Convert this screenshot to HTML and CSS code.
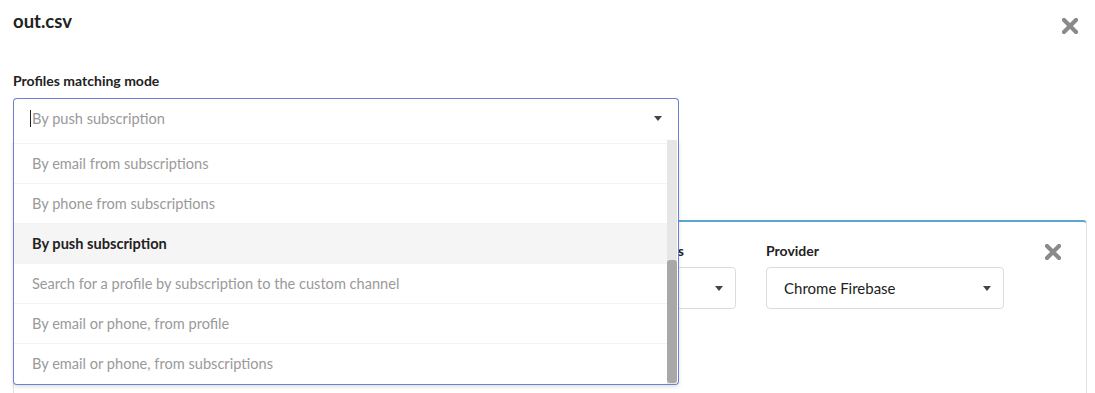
FILE: index.html
```html
<!DOCTYPE html>
<html>
<head>
<meta charset="utf-8">
<link rel="stylesheet" href="styles.css">
</head>
<body>
<div class="modal">
  <div class="header">
    <h1 class="title">out.csv</h1>
    <button class="close" aria-label="Close">
      <svg width="16" height="16" viewBox="0 0 16 16"><path d="M2 2 L14 14 M14 2 L2 14" stroke="#8a8a8a" stroke-width="4.2" stroke-linecap="round"/></svg>
    </button>
  </div>

  <div class="field">
    <div class="field-label">Profiles matching mode</div>
    <div class="select-wrap">
      <div class="select open">
        <span class="cursor"></span>
        <span class="placeholder">By push subscription</span>
        <span class="caret"></span>
      </div>
      <div class="menu">
        <div class="options">
          <div class="option">By email from subscriptions</div>
          <div class="option">By phone from subscriptions</div>
          <div class="option active">By push subscription</div>
          <div class="option">Search for a profile by subscription to the custom channel</div>
          <div class="option">By email or phone, from profile</div>
          <div class="option">By email or phone, from subscriptions</div>
        </div>
        <div class="scrollbar"><div class="thumb"></div></div>
      </div>
    </div>
  </div>

  <div class="card">
    <div class="col col-a">
      <div class="box"><span></span><span class="caret"></span></div>
    </div>
    <div class="col col-b">
      <div class="field-label">Subscriptions</div>
      <div class="box"><span></span><span class="caret"></span></div>
    </div>
    <div class="col col-c">
      <div class="field-label">Provider</div>
      <div class="box"><span>Chrome Firebase</span><span class="caret"></span></div>
    </div>
    <button class="close card-close" aria-label="Remove">
      <svg width="16" height="16" viewBox="0 0 16 16"><path d="M2 2 L14 14 M14 2 L2 14" stroke="#8a8a8a" stroke-width="4.2" stroke-linecap="round"/></svg>
    </button>
  </div>
</div>
</body>
</html>
```

FILE: styles.css
```css
* { box-sizing: border-box; }
html, body { margin: 0; padding: 0; background: #fff; }
body {
  font-family: Lato, "Open Sans", sans-serif;
  color: #222;
  overflow: hidden;
}
.modal {
  padding: 10px 8px 0 13px;
}
.header {
  display: flex;
  justify-content: space-between;
  align-items: flex-start;
}
.title {
  margin: 0;
  font-size: 18.5px;
  line-height: 22px;
  font-weight: 700;
  color: #222;
}
.close {
  border: 0;
  background: none;
  padding: 0;
  width: 16px;
  height: 16px;
  margin: 8px 9px 0 0;
  display: block;
  cursor: pointer;
}
.close svg { display: block; }

.field { margin-top: 38px; }
.field-label {
  font-size: 14px;
  line-height: 18px;
  font-weight: 700;
  color: #222;
  white-space: nowrap;
}
.select-wrap {
  position: relative;
  width: 666px;
  margin-top: 8px;
}
.select {
  height: 42px;
  border: 1px solid #6a7fd8;
  border-bottom: 0;
  border-radius: 4px 4px 0 0;
  display: flex;
  align-items: center;
  padding: 0 16px 2px 16px;
  font-size: 14.6px;
}
.cursor {
  width: 1px;
  height: 17px;
  background: #222;
  margin-right: 1px;
}
.placeholder {
  color: #999;
  flex: 1;
}
.caret {
  width: 0;
  height: 0;
  border-left: 4.5px solid transparent;
  border-right: 4.5px solid transparent;
  border-top: 5px solid #444;
}
.menu {
  position: absolute;
  top: 100%;
  left: 0;
  right: 0;
  z-index: 5;
  height: 245px;
  background: #fff;
  border: 1px solid #6a7fd8;
  border-top: 0;
  border-radius: 0 0 4px 4px;
  box-shadow: 0 2px 4px rgba(0,0,0,0.12);
  display: flex;
  overflow: hidden;
}
.options {
  flex: 1;
  padding-top: 3px;
}
.option {
  height: 40px;
  border-top: 1px solid #f3f3f3;
  display: flex;
  align-items: center;
  padding-left: 18px;
  font-size: 14.6px;
  color: #9a9a9a;
  white-space: nowrap;
}
.option.active {
  background: #f5f5f5;
  color: #222;
  font-weight: 700;
}
.scrollbar {
  width: 10px;
  background: #e6e6e6;
  display: flex;
  flex-direction: column;
  margin-right: 1px;
}
.thumb {
  margin-top: 120px;
  flex: 1;
  margin-bottom: 1px;
  background: #a8a8a8;
  border-radius: 3px;
}

.card {
  margin-top: 80px;
  height: 200px;
  border: 1px solid #e0e0e0;
  border-top: 2px solid #5ba7cf;
  border-radius: 4px 4px 0 0;
  padding: 20px 25px 0 18px;
  display: flex;
  align-items: flex-start;
  gap: 30px;
}
.col-a { width: 436px; padding-top: 18px; }
.col-b { width: 238px; }
.col-b .field-label {
  text-align: right;
  padding-right: 52px;
}
.col-c { width: 238px; }
.box {
  margin-top: 7px;
  height: 42px;
  border: 1px solid #dcdcdc;
  border-radius: 4px;
  display: flex;
  align-items: center;
  justify-content: space-between;
  padding: 0 12px 0 17px;
  font-size: 15px;
  color: #222;
}
.card-close {
  margin: 2px 0 0 auto;
}
```
